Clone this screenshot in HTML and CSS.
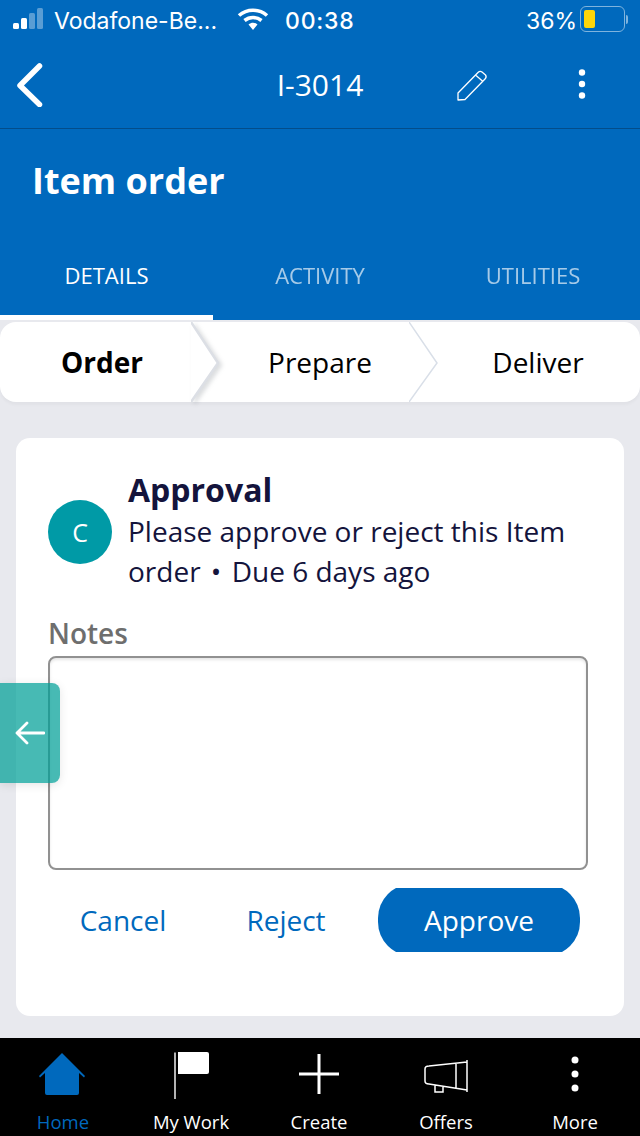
FILE: index.html
```html
<!DOCTYPE html>
<html lang="en">
<head>
    <meta charset="UTF-8">
    <meta name="viewport" content="width=device-width, initial-scale=1.0">
    <title>Item order</title>
    <link rel="stylesheet" href="styles.css">
</head>
<body>
<div class="phone">
    <header class="header">
        <div class="status">
            <div class="carrier">
                <svg class="signal" width="32" height="24" viewBox="0 0 32 24">
                    <rect x="0" y="16" width="6" height="6" rx="1.5" fill="#fff"/>
                    <rect x="8" y="11" width="6" height="11" rx="1.5" fill="#fff"/>
                    <rect x="16" y="6" width="6" height="16" rx="1.5" fill="#fff" opacity="0.35"/>
                    <rect x="24" y="1" width="6" height="21" rx="1.5" fill="#fff" opacity="0.35"/>
                </svg>
                <span>Vodafone-Be...</span>
            </div>
            <svg class="wifi" width="32" height="24" viewBox="0 0 32 24">
                <path d="M2 8.500C10 1.500 22 1.500 30 8.500" fill="none" stroke="#fff" stroke-width="3.600"/>
                <path d="M7.500 13.500C12.500 9.500 19.500 9.500 24.500 13.500" fill="none" stroke="#fff" stroke-width="3.600"/>
                <path d="M11.500 17.500C14.500 15 17.500 15 20.500 17.500L16 23Z" fill="#fff"/>
            </svg>
            <span class="time">00:38</span>
            <span class="percent">36%</span>
            <div class="battery"><div class="battery-level"></div></div>
            <div class="battery-tip"></div>
        </div>
        <div class="nav">
            <svg class="back" width="28" height="44" viewBox="0 0 28 44">
                <path d="M24.500 3L5 22.500L24.500 41.500" fill="none" stroke="#fff" stroke-width="5.500" stroke-linecap="round" stroke-linejoin="round"/>
            </svg>
            <div class="nav-title">I-3014</div>
            <svg class="edit" width="32" height="32" viewBox="0 0 32 32">
                <path d="M2 24L22 3.500Q24 1.500 26 3L29.500 6Q31 8 29 10L9 30.500L2 31Z M19.500 6L27 12.500" fill="none" stroke="#fff" stroke-width="1.300" stroke-linejoin="round"/>
            </svg>
            <svg class="dots" width="10" height="32" viewBox="0 0 10 32">
                <circle cx="5" cy="3.500" r="3.200" fill="#fff"/>
                <circle cx="5" cy="15" r="3.200" fill="#fff"/>
                <circle cx="5" cy="26.500" r="3.200" fill="#fff"/>
            </svg>
        </div>
        <div class="title-area">
            <h1>Item order</h1>
        </div>
        <div class="tabs">
            <div class="tab active">DETAILS</div>
            <div class="tab">ACTIVITY</div>
            <div class="tab">UTILITIES</div>
        </div>
    </header>

    <div class="steps">
        <div class="step current">Order
            <svg class="chevron shadowed" width="32" height="80" viewBox="0 0 32 80">
                <path d="M0 0L27 41L0 80" fill="#fff" stroke="#dcdfe5" stroke-width="2.500"/>
            </svg>
        </div>
        <div class="step">Prepare
            <svg class="chevron" width="32" height="80" viewBox="0 0 32 80">
                <path d="M0 0L28 41L0 80" fill="#fff" stroke="#d9dfe8" stroke-width="1.500"/>
            </svg>
        </div>
        <div class="step">Deliver</div>
    </div>

    <main class="content">
        <section class="card">
            <div class="task">
                <div class="avatar">C</div>
                <div class="task-text">
                    <h2>Approval</h2>
                    <p>Please approve or reject this Item<br>order <span class="sep">•</span> Due 6 days ago</p>
                </div>
            </div>
            <label class="notes-label">Notes</label>
            <div class="notes"></div>
            <div class="actions">
                <button class="link-btn cancel">Cancel</button>
                <button class="link-btn reject">Reject</button>
                <button class="approve">Approve</button>
            </div>
        </section>
    </main>

    <nav class="tabbar">
        <div class="tabbar-item home">
            <svg width="48" height="44" viewBox="0 0 48 44">
                <path d="M24 1L47 24L46 25.500L41 21V41Q41 43 39 43H9Q7 43 7 41V21L2 25.500L1 24Z" fill="#0069bd"/>
            </svg>
            <span>Home</span>
        </div>
        <div class="tabbar-item">
            <svg width="40" height="48" viewBox="0 0 40 48">
                <path d="M4 0.500V47" stroke="#fff" stroke-width="1.400" fill="none"/>
                <path d="M7 0H36Q38 0 38 2V20Q38 22 36 22H7Z" fill="#fff"/>
            </svg>
            <span>My Work</span>
        </div>
        <div class="tabbar-item create">
            <svg width="40" height="40" viewBox="0 0 40 40">
                <path d="M20 0V40M0 20H40" stroke="#fff" stroke-width="3" fill="none"/>
            </svg>
            <span>Create</span>
        </div>
        <div class="tabbar-item offers">
            <svg width="46" height="36" viewBox="0 0 46 36">
                <path d="M44 1V33M44 3L6 7Q2 7 2 10V22Q2 25 6 25L44 31M33 4V29.500M12 26V33H20V27.500" stroke="#fff" stroke-width="1.500" fill="none"/>
            </svg>
            <span>Offers</span>
        </div>
        <div class="tabbar-item more">
            <svg width="10" height="40" viewBox="0 0 10 40">
                <circle cx="5" cy="6" r="3.500" fill="#fff"/>
                <circle cx="5" cy="20" r="3.500" fill="#fff"/>
                <circle cx="5" cy="34" r="3.500" fill="#fff"/>
            </svg>
            <span>More</span>
        </div>
    </nav>

    <div class="drawer">
        <svg width="30" height="24" viewBox="0 0 30 24">
            <path d="M29 12H2M12 2L2 12L12 22" fill="none" stroke="#fff" stroke-width="2.800" stroke-linecap="round" stroke-linejoin="round"/>
        </svg>
    </div>
</div>
</body>
</html>
```
FILE: styles.css
```css
* {
    margin: 0;
    padding: 0;
    box-sizing: border-box;
}

body {
    font-family: "Open Sans", "Noto Sans", sans-serif;
    background: #e8e9ee;
}

.phone {
    width: 640px;
    height: 1136px;
    position: relative;
    overflow: hidden;
    display: flex;
    flex-direction: column;
    background: #e8e9ee;
}

/* blue top part */
.header {
    height: 320px;
    background: #0069bd;
    color: #fff;
    display: flex;
    flex-direction: column;
}

.status {
    height: 40px;
    display: flex;
    align-items: center;
    padding: 2px 0 0 13px;
    font-size: 24px;
}

.carrier {
    width: 224px;
    display: flex;
    align-items: center;
    gap: 9px;
    white-space: nowrap;
    font-family: "Inter", "Open Sans", sans-serif;
    font-size: 23px;
    font-weight: 400;
}

.carrier .signal {
    flex: none;
    margin-top: -4px;
}

.wifi {
    flex: none;
    margin-top: -5px;
}

.time {
    margin-left: 16px;
    font-family: "Inter", sans-serif;
    font-weight: 500;
    font-size: 23px;
    letter-spacing: 0.8px;
}

.percent {
    margin-left: auto;
    font-family: "Inter", sans-serif;
    font-size: 23px;
}

.battery {
    width: 45px;
    height: 26px;
    margin-left: 3px;
    margin-top: -4px;
    border: 1.500px solid #7fb4de;
    border-radius: 6px;
    padding: 2.500px;
}

.battery-level {
    width: 11px;
    height: 18px;
    background: #ffd60a;
    border-radius: 2px;
}

.battery-tip {
    width: 2px;
    height: 9px;
    margin: -4px 12px 0 1px;
    background: #7fb4de;
    border-radius: 0 2px 2px 0;
}

.nav {
    height: 89px;
    border-bottom: 1px solid #034d8a;
    display: flex;
    align-items: center;
    position: relative;
    padding-top: 2px;
}

.back {
    margin-left: 15px;
    flex: none;
}

.nav-title {
    position: absolute;
    left: 0;
    right: 0;
    top: 25px;
    text-align: center;
    font-size: 30px;
    font-weight: 500;
    line-height: 40px;
}

.edit {
    margin-left: 413px;
    flex: none;
}

.dots {
    margin-left: 89px;
    flex: none;
}

.title-area {
    flex: 1;
    padding: 28px 32px 0;
}

.title-area h1 {
    font-size: 36px;
    font-weight: 700;
    line-height: 48px;
}

.tabs {
    height: 64px;
    display: grid;
    grid-template-columns: 213px 214px 212px;
}

.tab {
    text-align: center;
    font-size: 22px;
    line-height: 38px;
    opacity: 0.65;
}

.tab.active {
    opacity: 1;
    border-bottom: 5px solid #fff;
}

/* order / prepare / deliver */
.steps {
    height: 80px;
    margin-top: 2px;
    background: #fff;
    border-radius: 16px;
    display: grid;
    grid-template-columns: 191px 218px 231px;
    box-shadow: 0 3px 3px rgba(0, 0, 0, 0.03);
}

.step {
    position: relative;
    display: flex;
    align-items: center;
    justify-content: center;
    font-size: 28px;
    color: #000;
    padding-left: 40px;
}

.step:last-child {
    padding-left: 27px;
}

.step.current {
    font-weight: 700;
    padding-left: 13px;
}

.chevron {
    position: absolute;
    left: 100%;
    top: 0;
}

.chevron.shadowed {
    filter: drop-shadow(3px 2px 2px rgba(90, 100, 110, 0.22));
}

.content {
    flex: 1;
    padding: 36px 16px 22px;
}

.card {
    height: 578px;
    background: #fff;
    border-radius: 14px;
    padding: 32px 32px 0;
}

.task {
    display: flex;
    align-items: flex-start;
    gap: 16px;
}

.avatar {
    flex: none;
    width: 64px;
    height: 64px;
    margin-top: 30px;
    border-radius: 50%;
    background: #009aa6;
    color: #fff;
    font-size: 25px;
    display: flex;
    align-items: center;
    justify-content: center;
}

.task-text h2 {
    font-size: 32px;
    font-weight: 700;
    line-height: 40px;
    color: #14143c;
}

.task-text p {
    margin-top: 1px;
    font-size: 28px;
    line-height: 40px;
    color: #14143c;
}

.sep {
    margin: 0 3px;
}

.notes-label {
    display: block;
    margin-top: 23px;
    font-size: 28px;
    font-weight: 600;
    line-height: 38px;
    color: #6e6e6e;
}

.notes {
    height: 214px;
    width: 540px;
    margin-top: 4px;
    border: 2px solid #919191;
    border-radius: 8px;
    box-shadow: inset 0 2px 3px rgba(0, 0, 0, 0.1);
}

.actions {
    display: flex;
    align-items: center;
    margin-top: 14px;
    width: 532px;
}

.actions button {
    font-family: inherit;
    font-size: 28px;
    background: none;
    border: none;
}

.link-btn {
    color: #0069bd;
}

.cancel {
    width: 150px;
}

.reject {
    width: 180px;
    margin: 0 2px 0 -2px;
}

/* taller than it looks, top and bottom cut off flat */
.actions .approve {
    flex: none;
    width: 202px;
    height: 72px;
    background: #0069bd;
    color: #fff;
    border-radius: 34px;
    clip-path: inset(4px 0);
}

/* bottom bar */
.tabbar {
    height: 98px;
    background: #000;
    display: grid;
    grid-template-columns: 126px 130px 126px 128px 130px;
}

.tabbar-item {
    position: relative;
    color: #fff;
    font-size: 18.500px;
    font-weight: 500;
    text-align: center;
}

.tabbar-item svg {
    position: absolute;
    left: 50%;
    top: 14px;
    transform: translateX(-50%);
}

.tabbar-item span {
    position: absolute;
    left: 0;
    right: 0;
    top: 72px;
    line-height: 24px;
}

.tabbar-item.home {
    color: #0069bd;
}

.tabbar-item.home svg {
    margin-left: -1px;
}

.tabbar-item.create svg {
    top: 16px;
}

.tabbar-item.offers svg {
    top: 21px;
}

.tabbar-item.more svg {
    top: 16px;
}

.drawer {
    position: absolute;
    left: 0;
    top: 683px;
    width: 60px;
    height: 100px;
    background: rgba(0, 159, 151, 0.72);
    border-radius: 0 8px 8px 0;
    box-shadow: 0 2px 10px rgba(0, 0, 0, 0.1);
    display: flex;
    align-items: center;
    padding-left: 15px;
}
```
